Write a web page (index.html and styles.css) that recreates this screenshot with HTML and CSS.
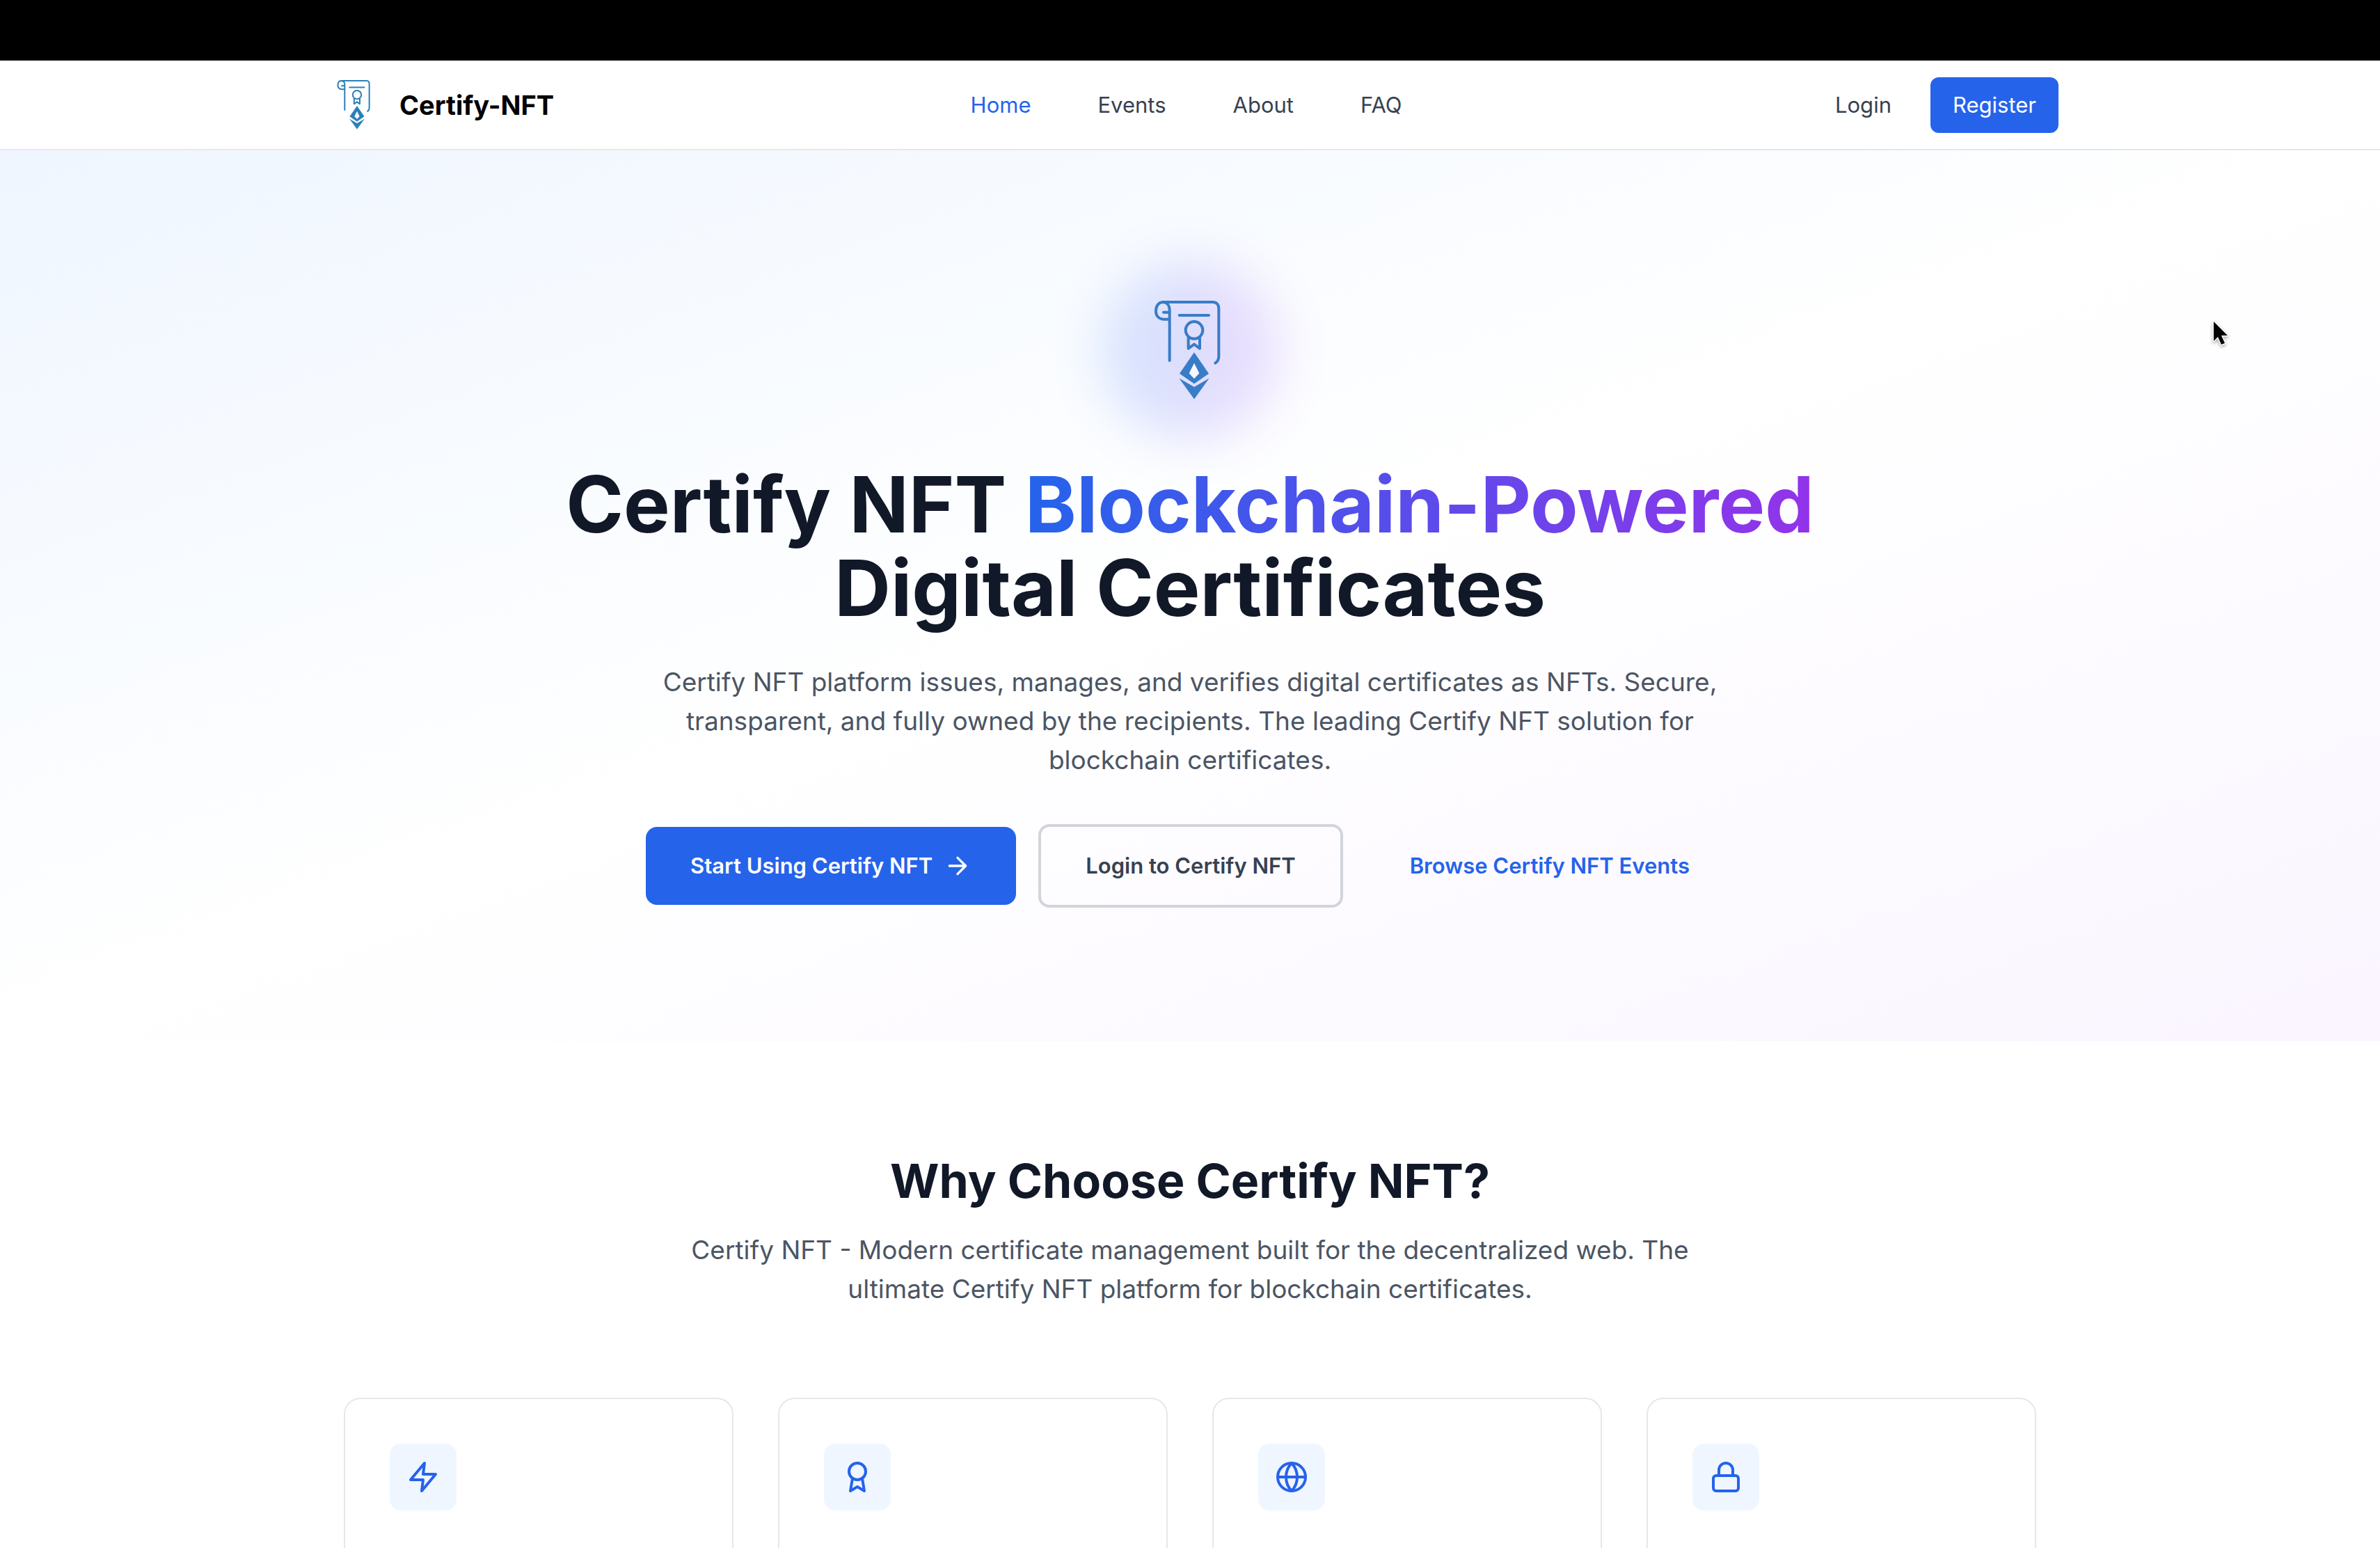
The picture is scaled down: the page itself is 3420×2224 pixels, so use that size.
FILE: index.html
```html
<!DOCTYPE html>
<html lang="en">
<head>
<meta charset="utf-8">
<title>Certify-NFT</title>
<link rel="stylesheet" href="styles.css">
</head>
<body>
<svg class="defs" aria-hidden="true">
  <symbol id="logo" viewBox="282 264 576 576">
    <g fill="none" stroke="currentColor" stroke-width="12" stroke-linecap="round" stroke-linejoin="round">
      <path d="M453 342H670Q694 344 694 370V578Q693 596 679 605"/>
      <path d="M476 416H456C434 415 423 400 423 380C423 358 435 343 453 342C472 344 482 358 482 374V594"/>
      <path d="M456 386H478M524 399H651"/>
      <circle cx="588" cy="463" r="37"/>
      <path d="M563 496V542L588 524L612 542V496"/>
    </g>
    <g fill="currentColor" stroke="currentColor" stroke-width="2" stroke-linejoin="round">
      <path d="M588 560L650 650L588 693L526 650Z"/>
      <path d="M526 673L588 709L650 673L588 759Z"/>
    </g>
    <path class="logo-gem" d="M588 605L610 649L588 672L566 649Z"/>
  </symbol>
</svg>
<div class="topbar"></div>
<header class="header">
  <div class="container header-inner">
    <a class="brand" href="#"><svg class="brand-logo" aria-hidden="true"><use href="#logo"/></svg><span>Certify-NFT</span></a>
    <nav class="nav">
      <a class="active" href="#">Home</a>
      <a href="#">Events</a>
      <a href="#">About</a>
      <a href="#">FAQ</a>
    </nav>
    <div class="account">
      <a class="login" href="#">Login</a>
      <button class="register" type="button">Register</button>
    </div>
  </div>
</header>
<main>
  <section class="hero">
    <div class="emblem"><svg class="emblem-logo" aria-hidden="true"><use href="#logo"/></svg></div>
    <h1>Certify NFT <span class="accent">Blockchain-Powered</span> Digital Certificates</h1>
    <p class="lead">Certify NFT platform issues, manages, and verifies digital certificates as NFTs. Secure, transparent, and fully owned by the recipients. The leading Certify NFT solution for blockchain certificates.</p>
    <div class="actions">
      <button class="btn btn-primary" type="button">Start Using Certify NFT
        <svg class="arrow" viewBox="0 0 24 24" aria-hidden="true"><path d="M5 12h14M12 5l7 7-7 7"/></svg>
      </button>
      <button class="btn btn-outline" type="button">Login to Certify NFT</button>
      <a class="btn btn-link" href="#">Browse Certify NFT Events</a>
    </div>
  </section>
  <section class="features">
    <h2>Why Choose Certify NFT?</h2>
    <p class="lead">Certify NFT - Modern certificate management built for the decentralized web. The ultimate Certify NFT platform for blockchain certificates.</p>
    <div class="cards">
      <article class="card"><div class="tile"><svg viewBox="0 0 24 24" aria-hidden="true"><path d="M13 2L3 14h9l-1 8 10-12h-9l1-8z"/></svg></div></article>
      <article class="card"><div class="tile"><svg viewBox="0 0 24 24" aria-hidden="true"><circle cx="12" cy="8" r="6"/><path d="M15.477 12.89L17 22l-5-3-5 3 1.523-9.11"/></svg></div></article>
      <article class="card"><div class="tile"><svg viewBox="0 0 24 24" aria-hidden="true"><circle cx="12" cy="12" r="10"/><path d="M12 2a14.5 14.5 0 0 0 0 20a14.5 14.5 0 0 0 0-20M2 12h20"/></svg></div></article>
      <article class="card"><div class="tile"><svg viewBox="0 0 24 24" aria-hidden="true"><rect x="3" y="11" width="18" height="11" rx="2"/><path d="M7 11V7a5 5 0 0 1 10 0v4"/></svg></div></article>
    </div>
  </section>
</main>
<svg class="cursor" viewBox="0 0 28 40" aria-hidden="true"><path d="M3 3V31L9 25L14 36L19 34L14 23H23Z"/></svg>
</body>
</html>
```
FILE: styles.css
```css
* {
  box-sizing: border-box;
}

body {
  margin: 0;
  position: relative;
  background: #fff;
  color: #111827;
  font-family: Inter, "Liberation Sans", sans-serif;
  font-size: 31px;
  line-height: 48px;
}

a {
  color: inherit;
  text-decoration: none;
}

button {
  border: 0;
  font: inherit;
  cursor: pointer;
}

h1,
h2,
p {
  margin: 0;
}

.defs {
  display: none;
}

.logo-gem {
  fill: #f8f8ff;
}

.topbar {
  height: 87px;
  background: #000;
}

.header {
  border-bottom: 2px solid #e5e7eb;
  background: #fff;
}

.container {
  max-width: 2560px;
  margin: 0 auto;
  padding: 0 32px;
}

.header-inner {
  display: flex;
  align-items: center;
  justify-content: space-between;
  height: 127px;
}

.brand {
  display: flex;
  align-items: center;
  gap: 16px;
  color: #000;
  font-size: 38px;
  font-weight: 700;
}

.brand-logo {
  width: 96px;
  height: 96px;
  color: #2980b9;
}

.nav {
  display: flex;
  gap: 96px;
  color: #374151;
}

.nav .active {
  color: #2563eb;
}

.account {
  display: flex;
  align-items: center;
  gap: 32px;
}

.login {
  padding: 16px 24px;
  color: #374151;
}

.register {
  padding: 16px 32px;
  border-radius: 12px;
  background: #2563eb;
  color: #fff;
}

.hero {
  display: flex;
  flex-direction: column;
  align-items: center;
  padding: 160px 64px 192px;
  background: linear-gradient(to bottom right, #eff6ff, #fff, #faf5ff);
  text-align: center;
}

.emblem {
  position: relative;
  display: grid;
  place-items: center;
  width: 256px;
  height: 256px;
  margin-bottom: 32px;
}

.emblem::before {
  content: "";
  position: absolute;
  inset: 0;
  border-radius: 50%;
  background: linear-gradient(to right, #3b82f6, #a855f7);
  opacity: 0.2;
  filter: blur(36px);
}

.emblem-logo {
  position: relative;
  width: 192px;
  height: 192px;
  color: #397cc8;
}

h1 {
  max-width: 2048px;
  font-size: 112px;
  font-weight: 700;
  line-height: 120px;
}

.accent {
  background: linear-gradient(to right, #2563eb, #9333ea);
  background-clip: text;
  color: transparent;
}

.lead {
  max-width: 1536px;
  color: #4b5563;
  font-size: 37px;
  line-height: 56px;
}

.hero .lead {
  margin: 48px 0 64px;
}

.actions {
  display: flex;
  flex-wrap: wrap;
  align-items: center;
  justify-content: center;
  gap: 32px;
}

.btn {
  display: flex;
  align-items: center;
  gap: 16px;
  padding: 32px 64px;
  border-radius: 16px;
  font-weight: 600;
}

.btn-primary {
  background: #2563eb;
  color: #fff;
}

.btn-outline {
  border: 4px solid #d1d5db;
  background: transparent;
  color: #374151;
}

.btn-link {
  color: #2563eb;
}

.arrow {
  width: 40px;
  height: 40px;
}

.arrow,
.tile svg {
  fill: none;
  stroke: currentColor;
  stroke-width: 2;
  stroke-linecap: round;
  stroke-linejoin: round;
}

.features {
  display: flex;
  flex-direction: column;
  align-items: center;
  max-width: 2560px;
  margin: 0 auto;
  padding: 160px 64px;
  text-align: center;
}

h2 {
  margin-bottom: 32px;
  font-size: 68px;
  font-weight: 700;
  line-height: 80px;
}

.cards {
  display: grid;
  grid-template-columns: repeat(4, 1fr);
  gap: 64px;
  width: 100%;
  margin-top: 128px;
}

.card {
  min-height: 480px;
  padding: 64px;
  border: 2px solid #e5e7eb;
  border-radius: 24px;
}

.tile {
  display: grid;
  place-items: center;
  width: 96px;
  height: 96px;
  border-radius: 16px;
  background: #eff6ff;
  color: #2563eb;
}

.tile svg {
  width: 48px;
  height: 48px;
}

.cursor {
  position: absolute;
  top: 459px;
  right: 214px;
  width: 28px;
  height: 40px;
  fill: #000;
  stroke: #fff;
  stroke-width: 3;
  stroke-linejoin: round;
  paint-order: stroke;
  filter: drop-shadow(0 2px 2px rgb(0 0 0 / 35%));
}
```
